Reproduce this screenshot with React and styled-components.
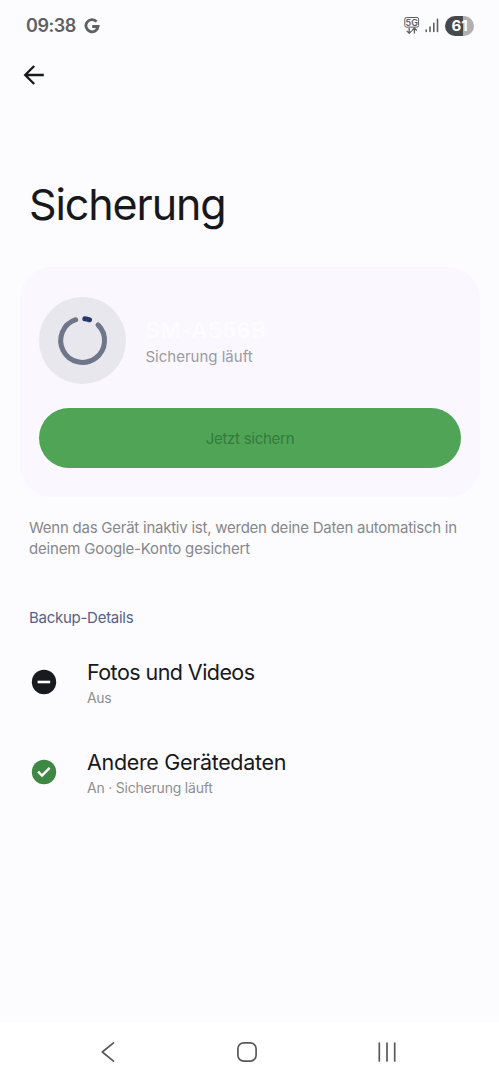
import React from 'react'
import styled, { createGlobalStyle } from 'styled-components'

const details = [
  { title: 'Fotos und Videos', status: 'Aus', enabled: false, spacing: '-0.56px', statusSpacing: '-0.3px' },
  { title: 'Andere Gerätedaten', status: 'An · Sicherung läuft', enabled: true, spacing: '-0.33px', statusSpacing: '-0.21px' },
]

function StatusBar() {
  return (
    <Status>
      <Text as="time" $size={18} $weight={600} $color="#5f6063" $spacing="-0.45px" $line={24}>09:38</Text>
      <svg className="google" width="16" height="16" viewBox="0 0 16 16" fill="none" stroke="#5f6063" strokeWidth="2.8">
        <path d="M12.6 3.6A6.1 6.1 0 1 0 14.1 8.5H8.2" />
      </svg>
      <div className="indicators">
        <svg width="16" height="18" viewBox="0 0 16 18" fill="none" stroke="#606064" strokeWidth="1">
          <rect x="0.8" y="0.5" width="13.8" height="9.6" rx="1.6" />
          <text x="7.7" y="8.6" textAnchor="middle" fontFamily="Inter, sans-serif" fontSize="9" fontWeight="600" fill="#606064" stroke="none">5G</text>
          <path d="M5.2 10.8v5.4M2.8 13.9l2.4 2.5 2.4-2.5M10.4 16.6v-5.4M8 13.5l2.4-2.5 2.4 2.5" strokeWidth="1.3" />
        </svg>
        <svg width="14" height="15" viewBox="0 0 14 15" stroke="#606064" strokeWidth="1.6" strokeLinecap="round">
          <path d="M1.2 12v1.5M5 9v4.5M8.8 5.2v8.3M12.5 1.2v12.3" />
        </svg>
        <Battery>61</Battery>
      </div>
    </Status>
  )
}

function Progress() {
  return (
    <ProgressCircle>
      <svg width="87" height="87" viewBox="0 0 87 87" fill="none" strokeWidth="5" strokeLinecap="round">
        <path d="M59 27.9A21.9 21.9 0 1 1 36.7 22.7" stroke="#70768a" />
        <path d="M45.8 21.7A21.9 21.9 0 0 1 50.5 22.8" stroke="#27376f" />
      </svg>
    </ProgressCircle>
  )
}

function StateIcon({ enabled }) {
  return (
    <svg width="26" height="26" viewBox="0 0 26 26" fill="none">
      <circle cx="13" cy="13" r="12.2" fill={enabled ? '#3e8744' : '#181a20'} />
      {enabled
        ? <path d="M7.1 12.7l3.9 3.9 7.7-7.7" stroke="#fff" strokeWidth="2.4" />
        : <path d="M6.6 13h12.6" stroke="#fff" strokeWidth="2.6" />
      }
    </svg>
  )
}

function App() {
  return (
    <Screen>
      <GlobalStyle />
      <StatusBar />
      <BackButton aria-label="Zurück">
        <svg width="22" height="22" viewBox="0 0 22 22" fill="none" stroke="#17181c" strokeWidth="2.3">
          <path d="M20.8 11H3M11.2 2L2.2 11l9 9" />
        </svg>
      </BackButton>
      <Content>
        <Title>Sicherung</Title>
        <Card>
          <div className="device">
            <Progress />
            <div className="info">
              <Text $size={22} $weight={600} $color="#fdfcff" $spacing="0.55px" $line={30}>SM-A556B</Text>
              <Text $size={15} $color="#9c9ba1" $spacing="0px" $line={24}>Sicherung läuft</Text>
            </div>
          </div>
          <BackupButton disabled>Jetzt sichern</BackupButton>
        </Card>
        <Note>
          <Text $size={15} $color="#86878b" $spacing="-0.24px" $line={20.5}>Wenn das Gerät inaktiv ist, werden deine Daten automatisch in</Text>
          <Text $size={15} $color="#86878b" $spacing="-0.17px" $line={20.5}>deinem Google-Konto gesichert</Text>
        </Note>
        <Section>
          <Text as="h2" $size={15} $color="#566185" $spacing="-0.27px" $line={20}>Backup-Details</Text>
        </Section>
        <DetailList>
          {details.map((item) => (
            <DetailRow key={item.title}>
              <StateIcon enabled={item.enabled} />
              <div>
                <Text $size={21.5} $color="#17181c" $spacing={item.spacing} $line={28}>{item.title}</Text>
                <Text $size={14} $color="#8e8f93" $spacing={item.statusSpacing} $line={24}>{item.status}</Text>
              </div>
            </DetailRow>
          ))}
        </DetailList>
      </Content>
      <Navigation>
        <svg width="16" height="22" viewBox="0 0 16 22"><path d="M13.5 1.8L2.3 11l11.2 9.2" /></svg>
        <svg width="22" height="22" viewBox="0 0 22 22"><rect x="1.9" y="1.9" width="18.2" height="18.2" rx="5.8" /></svg>
        <svg width="20" height="22" viewBox="0 0 20 22"><path d="M2.3 2v18M10 2v18M17.7 2v18" /></svg>
      </Navigation>
    </Screen>
  )
}

const GlobalStyle = createGlobalStyle`
  * {
    box-sizing: border-box;
  }
  body {
    margin: 0;
    background: #fcfcff;
    font-family: Inter, "Liberation Sans", sans-serif;
  }
  svg {
    display: block;
    flex-shrink: 0;
  }
`

const Text = styled.p`
  margin: 0;
  font-size: ${(props) => props.$size}px;
  font-weight: ${(props) => props.$weight || 400};
  color: ${(props) => props.$color};
  letter-spacing: ${(props) => props.$spacing};
  line-height: ${(props) => props.$line}px;
  white-space: nowrap;
`

const Screen = styled.div`
  display: flex;
  flex-direction: column;
  width: 499px;
  height: 1080px;
  overflow: hidden;
  background: #fcfcff;
`

const Status = styled.header`
  display: flex;
  align-items: center;
  height: 51px;
  padding: 0 25px 0 26px;
  .google {
    margin-left: 8px;
  }
  .indicators {
    display: flex;
    align-items: center;
    gap: 5px;
    margin-left: auto;
  }
`

const Battery = styled.span`
  width: 29px;
  height: 20px;
  margin-left: 1px;
  border-radius: 10px;
  background: linear-gradient(90deg, #47484b 61%, #b0b0b3 61%);
  color: #fff;
  font-size: 15px;
  font-weight: 700;
  line-height: 20px;
  text-align: center;
`

const BackButton = styled.button`
  display: flex;
  align-items: center;
  width: 60px;
  height: 48px;
  padding: 0 0 0 23px;
  border: 0;
  background: none;
`

const Content = styled.main`
  flex: 1;
`

const Title = styled.h1`
  height: 60px;
  margin: 75px 0 33px 29px;
  color: #17181c;
  font-size: 43px;
  font-weight: 400;
  line-height: 60px;
  letter-spacing: -1.1px;
`

const Card = styled.section`
  height: 230px;
  margin: 0 19px 0 20px;
  padding: 30px 19px 29px;
  border-radius: 32px;
  background: #faf7fe;
  .device {
    display: flex;
    gap: 19.5px;
  }
  .info {
    padding-top: 18px;
  }
`

const ProgressCircle = styled.div`
  width: 87px;
  height: 87px;
  border-radius: 50%;
  background: #e7e7ed;
`

const BackupButton = styled.button`
  display: block;
  width: 100%;
  height: 60px;
  margin-top: 24px;
  padding: 0;
  border: 0;
  border-radius: 30px;
  background: #50a456;
  color: #347b3c;
  font-family: inherit;
  font-size: 15px;
  letter-spacing: -0.27px;
`

const Note = styled.div`
  margin: 21px 0 0 29px;
`

const Section = styled.div`
  margin: 49px 0 0 29px;
`

const DetailList = styled.div`
  display: flex;
  flex-direction: column;
  gap: 38px;
  margin: 30px 0 0 30.5px;
`

const DetailRow = styled.div`
  display: flex;
  align-items: center;
  gap: 30.5px;
  height: 52px;
  svg {
    margin-top: -4px;
  }
`

const Navigation = styled.nav`
  display: flex;
  align-items: center;
  justify-content: space-between;
  height: 58px;
  padding: 1px 102px 0 100px;
  background: #fff;
  svg {
    fill: none;
    stroke: #59595b;
    stroke-width: 1.7;
    stroke-linecap: round;
    stroke-linejoin: round;
  }
`

export default App
